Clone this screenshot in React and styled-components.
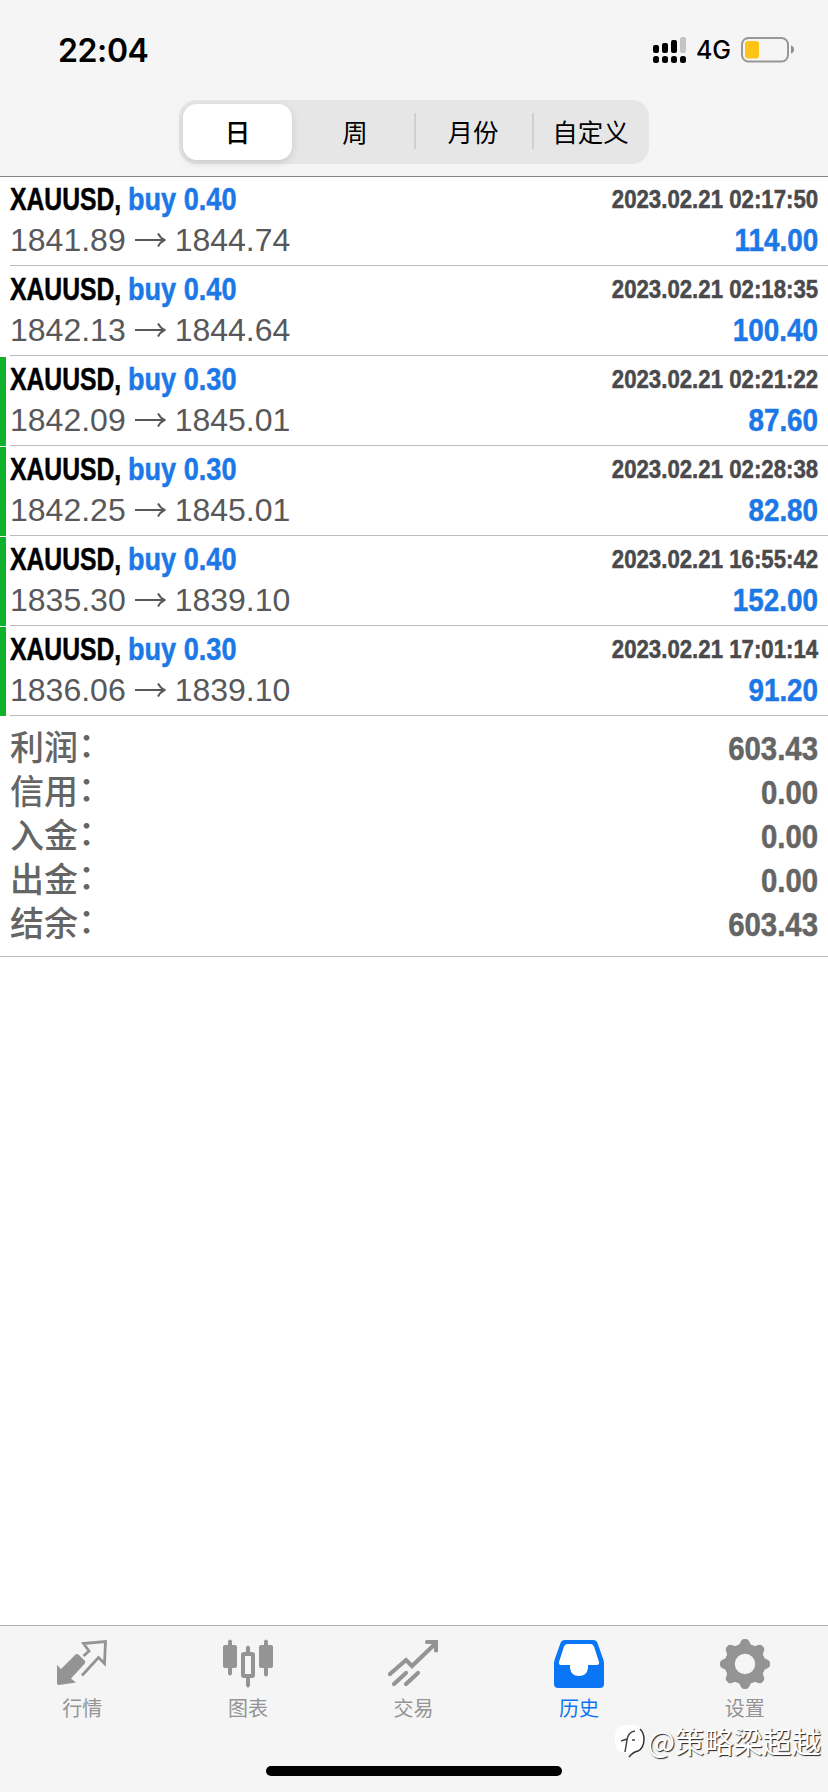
import styled, { createGlobalStyle } from "styled-components";

const GlobalStyle = createGlobalStyle`
  * {
    box-sizing: border-box;
  }
  body {
    margin: 0;
    background: #fff;
    font-family: Inter, "Noto Sans CJK SC", sans-serif;
  }
`;

const Screen = styled.div`
  position: relative;
  display: flex;
  flex-direction: column;
  width: 828px;
  height: 1792px;
  overflow: hidden;
  background: #fff;
`;

const Header = styled.header`
  height: 177px;
  background: #f5f5f5;
  border-bottom: 1px solid #858585;
`;

const StatusBar = styled.div`
  display: flex;
  align-items: center;
  height: 100px;
  padding: 0 33px 0 58px;
`;

const Clock = styled.span`
  flex: 1;
  font-size: 32px;
  font-weight: 600;
  letter-spacing: -0.4px;
  color: #000;
`;

const Network = styled.span`
  margin: 0 10px 0 9px;
  font-size: 25px;
  font-weight: 500;
  color: #000;
`;

const Segments = styled.div`
  display: grid;
  grid-template-columns: 117px 118px 118px 117px;
  width: 470px;
  height: 64px;
  margin-left: 179px;
  padding: 4px 0;
  border-radius: 17px;
  background: #e6e6e7;
`;

const Segment = styled.button`
  display: flex;
  align-items: center;
  justify-content: center;
  height: 56px;
  margin: ${(p) => (p.$active ? "0 4px" : "0")};
  padding: 0 0 3px;
  border: 0;
  border-radius: 14px;
  background: ${(p) => (p.$active ? "#fff" : "transparent")};
  box-shadow: ${(p) => (p.$active ? "0 3px 8px rgba(0, 0, 0, 0.12)" : "none")};
  font-family: "Noto Sans CJK SC", sans-serif;
  font-size: 25.5px;
  font-weight: ${(p) => (p.$active ? 500 : 400)};
  white-space: nowrap;
  color: #000;

  &::before {
    content: "";
    width: 2px;
    height: 36px;
    margin-right: auto;
    background: ${(p) => (p.$divider ? "#cfcfd1" : "transparent")};
  }

  &::after {
    content: "";
    width: 2px;
    margin-left: auto;
  }
`;

const Deals = styled.ul`
  margin: 0;
  padding: 0;
  list-style: none;
`;

const Deal = styled.li`
  display: flex;
  height: 90px;
  margin-top: ${(p) => (p.$first ? "-1px" : "0")};
`;

const Marker = styled.div`
  width: 6px;
  height: 89px;
  margin: 1px 4px 0 0;
  background: ${(p) => (p.$on ? "#11b22b" : "transparent")};
`;

const DealBody = styled.div`
  flex: 1;
  padding-right: 10px;
  border-bottom: 1px solid #bdbdbd;
`;

const Line = styled.div`
  display: flex;
  justify-content: space-between;
  align-items: flex-start;
  height: 41px;
  line-height: 46px;
`;

// squeezed bold face, scaled towards the edge it is aligned to
const Narrow = styled.span`
  display: inline-block;
  font-family: "Liberation Sans", sans-serif;
  font-size: ${(p) => p.$size || 32}px;
  font-weight: 700;
  white-space: nowrap;
  color: ${(p) => p.$color || "#000"};
  transform: scaleX(${(p) => p.$scale});
  transform-origin: ${(p) => p.$origin || "right"} center;
  -webkit-text-stroke: 0.5px currentColor;
`;

const Title = styled.div`
  display: grid;
  grid-template-columns: 117.5px auto;
`;

const Prices = styled.span`
  display: flex;
  align-items: center;
  font-family: "Liberation Sans", sans-serif;
  font-size: 32px;
  color: #58585a;

  svg {
    margin: 0 9px;
  }
`;

const Totals = styled.section`
  padding: 10px;
  border-bottom: 1px solid #bdbdbd;
`;

const Total = styled.div`
  display: flex;
  justify-content: space-between;
  height: 44px;
  line-height: 44px;
`;

const TotalLabel = styled.span`
  font-family: "Liberation Sans", "Noto Sans CJK SC", sans-serif;
  font-size: 34px;
  font-weight: 500;
  color: #656565;
`;

const Colon = styled.span`
  display: inline-block;
  transform: translateY(-3px);
`;

const TabBar = styled.nav`
  display: grid;
  grid-template-columns: repeat(5, 1fr);
  height: 167px;
  margin-top: auto;
  padding-top: 13px;
  background: #f5f5f5;
  border-top: 1px solid #b0b0b0;
`;

const Tab = styled.a`
  display: flex;
  flex-direction: column;
  align-items: center;
  height: 90px;
  padding-right: 1px;
  font-family: "Noto Sans CJK SC", sans-serif;
  font-size: 20px;
  line-height: 30px;
  color: ${(p) => (p.$active ? "#0b76f5" : "#949494")};

  svg {
    margin-bottom: 4px;
  }
`;

const HomeIndicator = styled.div`
  position: absolute;
  left: 266px;
  bottom: 16px;
  width: 296px;
  height: 10px;
  border-radius: 5px;
  background: #000;
`;

const Watermark = styled.div`
  position: absolute;
  right: 7px;
  bottom: 32px;
  display: flex;
  align-items: center;
  gap: 1px;
  font-family: "Noto Sans CJK SC", sans-serif;
  font-size: 29.2px;
  line-height: 40px;
  color: #fff;
  text-shadow: 1px 1px 1px #222;

  svg {
    margin-top: 4px;
  }
`;

const SignalIcon = () => (
  <svg width="34" height="28" viewBox="0 0 34 28">
    <rect x="0" y="9" width="6" height="8" rx="2" />
    <rect x="9" y="7" width="6" height="10" rx="2" />
    <rect x="18" y="4" width="6" height="13" rx="2" />
    <rect x="27" y="1" width="6" height="16" rx="2" fill="#c4c4c5" />
    {[0, 9, 18, 27].map((x) => (
      <rect key={x} x={x} y="20" width="6" height="7" rx="2.5" />
    ))}
  </svg>
);

const BatteryIcon = () => (
  <svg width="54" height="26" viewBox="0 0 54 26">
    <rect x="1" y="1" width="46" height="23.5" rx="6.5" fill="none" stroke="#97979a" strokeWidth="2" />
    <rect x="4" y="4" width="14" height="17.5" rx="3" fill="#fdc416" />
    <path d="M50 8.5c4 1 4 7 0 8z" fill="#8e8e90" />
  </svg>
);

const ArrowIcon = () => (
  <svg width="31" height="16" viewBox="0 0 31 16" fill="none" stroke="#58585a" strokeWidth="2">
    <path d="M0 8h29M23 1.5c1.5 3 3.5 5 6.5 6.5c-3 1.5-5 3.5-6.5 6.5" />
  </svg>
);

const QuotesIcon = () => (
  <svg width="50" height="50" viewBox="0 0 50 50">
    <path d="M0 26l4 4 14-14q2-2 4 0l6 6q1 1.5-1 3.5l-13 14 5 4-17 2.500q-2 0-2-2z" fill="currentColor" />
    <path d="M26.500 17l5.500-5-5.500-7.500 22-2-1 22-6-6-16.500 18" fill="none" stroke="currentColor" strokeWidth="2.8" />
  </svg>
);

const ChartsIcon = () => (
  <svg width="50" height="50" viewBox="0 0 50 50" fill="currentColor">
    <path d="M5 2q2-3 4 0v33q-2 3-4 0zM41 2q2-3 4 0v34q-2 3-4 0zM23 8q2-3 4 0v7h-4zM23 38h4v9q-2 3-4 0z" />
    <rect x="0" y="6" width="14" height="23" rx="2" />
    <rect x="36" y="6" width="14" height="23" rx="2" />
    <rect x="20" y="15" width="10" height="22" rx="1" fill="none" stroke="currentColor" strokeWidth="4" />
  </svg>
);

const TradeIcon = () => (
  <svg width="50" height="50" viewBox="0 0 50 50" fill="none" stroke="currentColor" strokeWidth="4.2" strokeLinecap="round">
    <path d="M2 35l16-14 6 6L48 4" />
    <path d="M6 45l12-11M18 45l12-11" />
    <path d="M39 3h9v8.5" />
  </svg>
);

const HistoryIcon = () => (
  <svg width="50" height="50" viewBox="0 0 50 50">
    <path
      fill="currentColor"
      d="M11 1h28q3.500 0 4.500 3l6 17q.5 2 .5 4v20q0 4-4 4H4q-4 0-4-4V25q0-2 .5-4l6-17q1-3 4.500-3z"
    />
    <path fill="#fff" d="M13 5q-2 0-3 2.500L5 23q-.5 3 2 3h9v3q1 8 9 8t9-8v-3h9q2.500 0 2-3L40 7.500Q39 5 37 5z" />
  </svg>
);

const teeth = [0, 45, 90, 135, 180, 225, 270, 315];

const SettingsIcon = () => (
  <svg width="50" height="50" viewBox="0 0 50 50" fill="currentColor">
    {teeth.map((deg) => (
      <path key={deg} d="M15 8l4-2 2-4q1-2 3-2h2q2 0 3 2l2 4 4 2z" transform={`rotate(${deg} 25 25)`} />
    ))}
    <circle cx="25" cy="25" r="15.2" fill="none" stroke="currentColor" strokeWidth="10" />
  </svg>
);

const WatermarkIcon = () => (
  <svg width="31" height="34" viewBox="0 0 31 34" fill="none">
    <rect x="0" y="0" width="29" height="28" rx="10" fill="#fff" />
    <path d="M10 27l2-12q1-8 8-9M6 16l6-2M17 15h3" stroke="#444" strokeWidth="1.5" />
    <path d="M25 4q4 4 4 10q0 9-6 12q-5 1-9 6" stroke="#333" strokeWidth="1.5" />
  </svg>
);

const periods = ["日", "周", "月份", "自定义"];

const deals = [
  { volume: "0.40", open: "1841.89", close: "1844.74", time: "2023.02.21 02:17:50", profit: "114.00" },
  { volume: "0.40", open: "1842.13", close: "1844.64", time: "2023.02.21 02:18:35", profit: "100.40" },
  { volume: "0.30", open: "1842.09", close: "1845.01", time: "2023.02.21 02:21:22", profit: "87.60", marked: true },
  { volume: "0.30", open: "1842.25", close: "1845.01", time: "2023.02.21 02:28:38", profit: "82.80", marked: true },
  { volume: "0.40", open: "1835.30", close: "1839.10", time: "2023.02.21 16:55:42", profit: "152.00", marked: true },
  { volume: "0.30", open: "1836.06", close: "1839.10", time: "2023.02.21 17:01:14", profit: "91.20", marked: true },
];

const totals = [
  ["利润", "603.43"],
  ["信用", "0.00"],
  ["入金", "0.00"],
  ["出金", "0.00"],
  ["结余", "603.43"],
];

const tabs = [
  { label: "行情", Icon: QuotesIcon },
  { label: "图表", Icon: ChartsIcon },
  { label: "交易", Icon: TradeIcon },
  { label: "历史", Icon: HistoryIcon, active: true },
  { label: "设置", Icon: SettingsIcon },
];

function App() {
  return (
    <Screen>
      <GlobalStyle />
      <Header>
        <StatusBar>
          <Clock>22:04</Clock>
          <SignalIcon />
          <Network>4G</Network>
          <BatteryIcon />
        </StatusBar>
        <Segments>
          {periods.map((name, i) => (
            <Segment key={name} $active={i === 0} $divider={i > 1}>
              {name}
            </Segment>
          ))}
        </Segments>
      </Header>

      <Deals>
        {deals.map((deal, i) => (
          <Deal key={deal.time} $first={i === 0}>
            <Marker $on={deal.marked} />
            <DealBody>
              <Line>
                <Title>
                  <Narrow $scale={0.772} $origin="left">XAUUSD,</Narrow>
                  <Narrow $scale={0.847} $origin="left" $color="#1b78e6">
                    buy {deal.volume}
                  </Narrow>
                </Title>
                <Narrow $size={25} $scale={0.889} $color="#4a4a4c">{deal.time}</Narrow>
              </Line>
              <Line>
                <Prices>
                  {deal.open}
                  <ArrowIcon />
                  {deal.close}
                </Prices>
                <Narrow $scale={0.87} $color="#1b78e6">{deal.profit}</Narrow>
              </Line>
            </DealBody>
          </Deal>
        ))}
      </Deals>

      <Totals>
        {totals.map(([label, value]) => (
          <Total key={label}>
            <TotalLabel>
              {label}
              <Colon>：</Colon>
            </TotalLabel>
            <Narrow $size={34} $scale={0.864} $color="#656565">{value}</Narrow>
          </Total>
        ))}
      </Totals>

      <TabBar>
        {tabs.map(({ label, Icon, active }) => (
          <Tab key={label} $active={active}>
            <Icon />
            {label}
          </Tab>
        ))}
      </TabBar>
      <HomeIndicator />
      <Watermark>
        <WatermarkIcon />
        @策略梁超越
      </Watermark>
    </Screen>
  );
}

export default App;
